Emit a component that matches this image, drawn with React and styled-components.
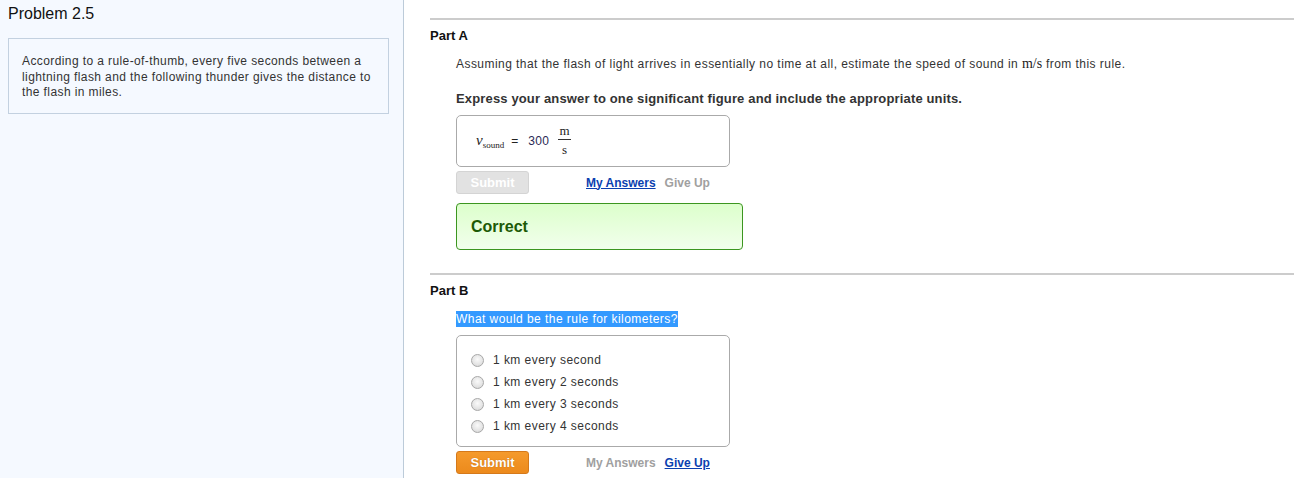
import React from "react";
import styled, { createGlobalStyle } from "styled-components";

const Global = createGlobalStyle`
  html, body { margin: 0; padding: 0; background: #fff; }
  body { font-family: "Liberation Sans", Arial, sans-serif; color: #333; }
`;

const Page = styled.div`
  display: flex;
  height: 478px;
  overflow: hidden;
`;

const Sidebar = styled.aside`
  width: 404px;
  flex-shrink: 0;
  background: #f5f9ff;
  border-right: 1px solid #bccbd9;
  padding: 4px 14px 0 8px;
  box-sizing: border-box;
`;

const Title = styled.h1`
  margin: 0 0 14px;
  font-size: 16px;
  line-height: 20px;
  font-weight: normal;
  color: #111;
`;

const Intro = styled.div`
  border: 1px solid #c3d1e0;
  padding: 15px 13px 12px;
  font-size: 12px;
  line-height: 15.5px;
  letter-spacing: 0.4px;
  color: #333;
`;

const Main = styled.main`
  flex: 1;
  padding: 18px 0 0 26px;
`;

const Part = styled.section`
  border-top: 2px solid #ccc;
  padding-top: 8px;
  margin-bottom: ${({ gap }) => gap || 0}px;
`;

const PartTitle = styled.h2`
  margin: 0;
  font-size: 13px;
  line-height: 16px;
  font-weight: bold;
  color: #111;
`;

const Body = styled.div`
  margin-left: 26px;
`;

const Question = styled.p`
  margin: 12px 0 0;
  font-size: 12px;
  line-height: 16px;
  letter-spacing: 0.45px;
  color: #333;
`;

const Highlight = styled.span`
  background: #3399ff;
  color: #fff;
  padding: 1px 0;
`;

const MathInline = styled.span`
  font-family: "Liberation Serif", "Times New Roman", serif;
  font-size: 14px;
  letter-spacing: 0;
  color: #222;
`;

const Instruction = styled.p`
  margin: 19px 0 0;
  font-size: 13px;
  line-height: 16px;
  letter-spacing: 0.15px;
  font-weight: bold;
  color: #333;
`;

const AnswerBox = styled.div`
  margin-top: ${({ top }) => top}px;
  width: 274px;
  height: ${({ h }) => h}px;
  box-sizing: border-box;
  border: 1px solid #aaa;
  border-radius: 5px;
  background: #fff;
`;

const Formula = styled.div`
  display: flex;
  align-items: center;
  height: 100%;
  padding-left: 19px;
  font-size: 12px;
`;

const Var = styled.span`
  font-family: "Liberation Serif", "Times New Roman", serif;
  font-style: italic;
  font-size: 15px;
  color: #222;
  sub {
    font-style: normal;
    font-size: 9px;
    vertical-align: -3px;
  }
`;

const Eq = styled.span`
  margin: 0 10px 0 7px;
  font-size: 12px;
  color: #222;
`;

const Value = styled.span`
  color: #2a2a55;
  font-size: 12px;
  letter-spacing: 0.4px;
  margin-right: 9px;
`;

const Frac = styled.span`
  display: inline-flex;
  flex-direction: column;
  align-items: center;
  font-family: "Liberation Serif", "Times New Roman", serif;
  font-size: 13px;
  line-height: 13px;
  color: #222;
  margin-top: -2px;
  span:first-child {
    border-bottom: 1px solid #333;
    padding: 0 1px 2px;
  }
  span:last-child {
    padding-top: 3px;
  }
`;

const Choices = styled.ul`
  list-style: none;
  margin: 0;
  padding: 13px 0 0 14px;
`;

const Choice = styled.li`
  display: flex;
  align-items: center;
  height: 22px;
  font-size: 12px;
  letter-spacing: 0.45px;
  color: #333;
`;

const Radio = styled.span`
  width: 11px;
  height: 11px;
  border-radius: 50%;
  border: 1px solid #a8a8a8;
  background: radial-gradient(circle at 50% 40%, #fafafa 0%, #e4e4e4 60%, #cfcfcf 100%);
  margin: 0 9px 0 0;
`;

const Actions = styled.div`
  display: flex;
  align-items: center;
  margin-top: 4px;
  height: 23px;
`;

const Button = styled.button`
  width: 73px;
  height: 23px;
  box-sizing: border-box;
  border-radius: 3px;
  font-family: "Liberation Sans", Arial, sans-serif;
  font-size: 13px;
  font-weight: bold;
  color: #fff;
  padding: 0;
  border: 1px solid ${({ disabled }) => (disabled ? "#d4d4d4" : "#d5791a")};
  background: ${({ disabled }) =>
    disabled ? "#e2e2e2" : "linear-gradient(#f59a2c, #ec8a1c)"};
  text-shadow: ${({ disabled }) => (disabled ? "none" : "0 0 1px #b0600a")};
`;

const Links = styled.div`
  display: flex;
  gap: 9px;
  margin-left: 57px;
  font-size: 12px;
  font-weight: bold;
`;

const ActionLink = styled.a`
  color: ${({ active }) => (active ? "#0b3fb0" : "#a0a0a0")};
  text-decoration: ${({ active }) => (active ? "underline" : "none")};
  cursor: pointer;
`;

const Feedback = styled.div`
  margin-top: 9px;
  width: 287px;
  height: 47px;
  box-sizing: border-box;
  border: 1px solid #3c9620;
  border-radius: 4px;
  background: linear-gradient(#dcffcc, #f2ffec);
  display: flex;
  align-items: center;
  padding-left: 14px;
  font-size: 16px;
  font-weight: bold;
  color: #1c5a06;
`;

const choices = [
  "1 km every second",
  "1 km every 2 seconds",
  "1 km every 3 seconds",
  "1 km every 4 seconds",
];

export default function App() {
  return (
    <>
      <Global />
      <Page>
        <Sidebar>
          <Title>Problem 2.5</Title>
          <Intro>
            According to a rule-of-thumb, every five seconds between a
            lightning flash and the following thunder gives the distance to
            the flash in miles.
          </Intro>
        </Sidebar>
        <Main>
          <Part gap={23}>
            <PartTitle>Part A</PartTitle>
            <Body>
              <Question>
                Assuming that the flash of light arrives in essentially no time
                at all, estimate the speed of sound in <MathInline>m/s</MathInline>{" "}
                from this rule.
              </Question>
              <Instruction>
                Express your answer to one significant figure and include the
                appropriate units.
              </Instruction>
              <AnswerBox top={8} h={52}>
                <Formula>
                  <Var>
                    v<sub>sound</sub>
                  </Var>
                  <Eq>=</Eq>
                  <Value>300</Value>
                  <Frac>
                    <span>m</span>
                    <span>s</span>
                  </Frac>
                </Formula>
              </AnswerBox>
              <Actions>
                <Button disabled>Submit</Button>
                <Links>
                  <ActionLink active>My Answers</ActionLink>
                  <ActionLink>Give Up</ActionLink>
                </Links>
              </Actions>
              <Feedback>Correct</Feedback>
            </Body>
          </Part>
          <Part>
            <PartTitle>Part B</PartTitle>
            <Body>
              <Question>
                <Highlight>What would be the rule for kilometers?</Highlight>
              </Question>
              <AnswerBox top={8} h={112}>
                <Choices>
                  {choices.map((c) => (
                    <Choice key={c}>
                      <Radio />
                      {c}
                    </Choice>
                  ))}
                </Choices>
              </AnswerBox>
              <Actions>
                <Button>Submit</Button>
                <Links>
                  <ActionLink>My Answers</ActionLink>
                  <ActionLink active>Give Up</ActionLink>
                </Links>
              </Actions>
            </Body>
          </Part>
        </Main>
      </Page>
    </>
  );
}
